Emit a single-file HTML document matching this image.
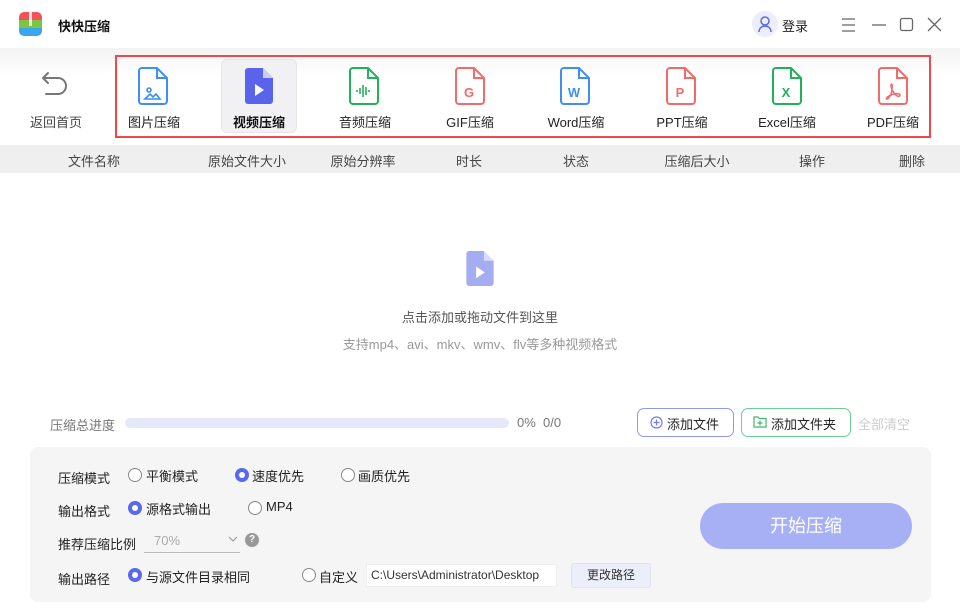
<!DOCTYPE html>
<html><head><meta charset="utf-8"><style>
*{margin:0;padding:0;box-sizing:border-box}
body{width:960px;height:614px;overflow:hidden;background:#fff;font-family:"Liberation Sans","Noto Sans CJK SC",sans-serif;color:#333;position:relative}
.a{position:absolute}
.t{font-size:13px;white-space:nowrap}
.lbl{position:absolute;top:112px;font-size:13px;color:#222;transform:translateX(-50%);white-space:nowrap}
.ic{position:absolute;top:67px;transform:translateX(-50%)}
.hd{position:absolute;top:151px;font-size:13px;color:#444;transform:translateX(-50%)}
.radio{position:absolute;width:14px;height:14px;border-radius:50%;border:1px solid #888;background:#fff}
.radio.on{border:none;background:#5a68f0}
.radio.on:after{content:"";position:absolute;left:4px;top:4px;width:6px;height:6px;border-radius:50%;background:#fff}
</style></head><body>
<!-- title bar -->
<div class="a" style="left:19px;top:12px;width:23px;height:24px;border-radius:5px;overflow:hidden">
<div style="height:8px;background:#f0545a"></div><div style="height:8px;background:#7cc444"></div><div style="height:8px;background:#3aa6f0"></div>
<div class="a" style="left:10px;top:0;width:3px;height:14px;background:#fff;opacity:.8"></div></div>
<div class="a t" style="left:58px;top:16px;font-weight:bold;color:#111">快快压缩</div>
<div class="a" style="left:752px;top:11px;width:26px;height:26px;border-radius:50%;background:#eceefc"></div>
<svg class="a" style="left:757px;top:15px" width="16" height="18" viewBox="0 0 16 18"><circle cx="8" cy="6" r="4" fill="none" stroke="#5a68f0" stroke-width="1.5"/><path d="M2 17c0-4 3-6 6-6s6 2 6 6" fill="none" stroke="#5a68f0" stroke-width="1.5"/></svg>
<div class="a t" style="left:782px;top:16px;color:#222">登录</div>
<svg class="a" style="left:841px;top:17px" width="100" height="16" viewBox="0 0 100 16"><path d="M1 2h13M1 8h13M1 14h13" stroke="#666" stroke-width="1.3"/><path d="M31 8h14" stroke="#666" stroke-width="1.3"/><rect x="59.5" y="1.5" width="12" height="12" rx="2" fill="none" stroke="#666" stroke-width="1.3"/><path d="M87 1l13 13M100 1L87 14" stroke="#666" stroke-width="1.3"/></svg>
<!-- toolbar -->
<div class="a" style="left:0;top:48px;width:960px;height:96px;background:linear-gradient(#f3f3f3,#fff 30%)"></div>
<svg class="a" style="left:40px;top:70px" width="30" height="30" viewBox="0 0 30 30"><path d="M8 3L3 8l5 5M3 8h15a8 8 0 0 1 0 16H6" fill="none" stroke="#777" stroke-width="2" stroke-linecap="round" stroke-linejoin="round"/></svg>
<div class="lbl" style="left:56px;color:#444">返回首页</div>
<div class="a" style="left:221px;top:59px;width:76px;height:74px;background:#f1f1f4;border-radius:6px;border:1px solid #e6e6ea"></div>
<div class="a" style="left:115px;top:55px;width:816px;height:83px;border:2px solid #f0474b"></div>
<svg class="ic" style="left:153px" width="30" height="38" viewBox="0 0 30 38"><path d="M4 1h15l10 10v23a3 3 0 0 1-3 3H4a3 3 0 0 1-3-3V4a3 3 0 0 1 3-3zM19 1v10h10" fill="none" stroke="#3d8ef5" stroke-width="2"/><circle cx="11" cy="23" r="2" fill="none" stroke="#3d8ef5" stroke-width="1.6"/><path d="M7 32l5-5 3 3 3-3 4 5z" fill="none" stroke="#3d8ef5" stroke-width="1.6"/></svg>
<svg class="ic" style="left:259px" width="30" height="38" viewBox="0 0 30 38"><path d="M4 1h15l10 10v23a3 3 0 0 1-3 3H4a3 3 0 0 1-3-3V4a3 3 0 0 1 3-3z" fill="#5a64ea"/><path d="M19 1v10h10z" fill="#c9cdf8"/><path d="M11 17v12l9-6z" fill="#fff"/></svg>
<svg class="ic" style="left:364px" width="30" height="38" viewBox="0 0 30 38"><path d="M4 1h15l10 10v23a3 3 0 0 1-3 3H4a3 3 0 0 1-3-3V4a3 3 0 0 1 3-3zM19 1v10h10" fill="none" stroke="#22b05a" stroke-width="2"/><path d="M8 23v2M11 21v6M14 18v12M17 20v8M20 23v2" stroke="#22b05a" stroke-width="1.6"/></svg>
<svg class="ic" style="left:470px" width="30" height="38" viewBox="0 0 30 38"><path d="M4 1h15l10 10v23a3 3 0 0 1-3 3H4a3 3 0 0 1-3-3V4a3 3 0 0 1 3-3zM19 1v10h10" fill="none" stroke="#f36a6a" stroke-width="2"/><text x="14" y="30" text-anchor="middle" font-family="Liberation Sans" font-weight="bold" font-size="13" fill="#f36a6a">G</text></svg>
<svg class="ic" style="left:575px" width="30" height="38" viewBox="0 0 30 38"><path d="M4 1h15l10 10v23a3 3 0 0 1-3 3H4a3 3 0 0 1-3-3V4a3 3 0 0 1 3-3zM19 1v10h10" fill="none" stroke="#3d8ef5" stroke-width="2"/><text x="14" y="30" text-anchor="middle" font-family="Liberation Sans" font-weight="bold" font-size="13" fill="#3d8ef5">W</text></svg>
<svg class="ic" style="left:681px" width="30" height="38" viewBox="0 0 30 38"><path d="M4 1h15l10 10v23a3 3 0 0 1-3 3H4a3 3 0 0 1-3-3V4a3 3 0 0 1 3-3zM19 1v10h10" fill="none" stroke="#f36a6a" stroke-width="2"/><text x="14" y="30" text-anchor="middle" font-family="Liberation Sans" font-weight="bold" font-size="13" fill="#f36a6a">P</text></svg>
<svg class="ic" style="left:787px" width="30" height="38" viewBox="0 0 30 38"><path d="M4 1h15l10 10v23a3 3 0 0 1-3 3H4a3 3 0 0 1-3-3V4a3 3 0 0 1 3-3zM19 1v10h10" fill="none" stroke="#22b05a" stroke-width="2"/><text x="14" y="30" text-anchor="middle" font-family="Liberation Sans" font-weight="bold" font-size="13" fill="#22b05a">X</text></svg>
<svg class="ic" style="left:893px" width="30" height="38" viewBox="0 0 30 38"><path d="M4 1h15l10 10v23a3 3 0 0 1-3 3H4a3 3 0 0 1-3-3V4a3 3 0 0 1 3-3zM19 1v10h10" fill="none" stroke="#f36a6a" stroke-width="2"/><path d="M14 17c-2 0-1 5 2 9s6 4 6 2-6-2-11 1-2 5 1 0 2-12 2-12" fill="none" stroke="#f36a6a" stroke-width="1.5"/></svg>
<div class="lbl" style="left:154px">图片压缩</div>
<div class="lbl" style="left:259px;font-weight:bold;color:#111">视频压缩</div>
<div class="lbl" style="left:365px">音频压缩</div>
<div class="lbl" style="left:470px">GIF压缩</div>
<div class="lbl" style="left:576px">Word压缩</div>
<div class="lbl" style="left:682px">PPT压缩</div>
<div class="lbl" style="left:787px">Excel压缩</div>
<div class="lbl" style="left:893px">PDF压缩</div>
<!-- header -->
<div class="a" style="left:0;top:145px;width:960px;height:28px;background:#efefef"></div>
<div class="hd" style="left:94px">文件名称</div><div class="hd" style="left:247px">原始文件大小</div><div class="hd" style="left:363px">原始分辨率</div><div class="hd" style="left:469px">时长</div><div class="hd" style="left:576px">状态</div><div class="hd" style="left:697px">压缩后大小</div><div class="hd" style="left:812px">操作</div><div class="hd" style="left:912px">删除</div>
<!-- empty -->
<svg class="a" style="left:465px;top:250px" width="30" height="37" viewBox="0 0 30 38"><path d="M4 1h15l10 10v23a3 3 0 0 1-3 3H4a3 3 0 0 1-3-3V4a3 3 0 0 1 3-3z" fill="#a4acf2"/><path d="M19 1v10h10z" fill="#d9dcfa"/><path d="M11 17v12l9-6z" fill="#fff"/></svg>
<div class="a t" style="left:0;width:960px;text-align:center;top:307px;color:#555">点击添加或拖动文件到这里</div>
<div class="a t" style="left:0;width:960px;text-align:center;top:334px;color:#999">支持mp4、avi、mkv、wmv、flv等多种视频格式</div>
<!-- progress -->
<div class="a t" style="left:50px;top:415px;color:#777">压缩总进度</div>
<div class="a" style="left:125px;top:418px;width:384px;height:10px;border-radius:5px;background:#e6e8fa"></div>
<div class="a t" style="left:517px;top:415px;color:#777">0%&nbsp; 0/0</div>
<div class="a" style="left:637px;top:408px;width:97px;height:29px;border:1.5px solid #8f98f0;border-radius:7px"></div>
<svg class="a" style="left:650px;top:416px" width="13" height="13"><circle cx="6.5" cy="6.5" r="5.5" fill="none" stroke="#6f7cf0" stroke-width="1.2"/><path d="M6.5 3.5v6M3.5 6.5h6" stroke="#6f7cf0" stroke-width="1.2"/></svg>
<div class="a t" style="left:667px;top:414px;color:#222">添加文件</div>
<div class="a" style="left:741px;top:408px;width:110px;height:29px;border:1.5px solid #6ccf93;border-radius:7px"></div>
<svg class="a" style="left:753px;top:415px" width="14" height="13"><path d="M1 2h4l1.5 1.5H13V12H1z" fill="none" stroke="#3cb86a" stroke-width="1.2"/><path d="M7 5.5v5M4.5 8h5" stroke="#3cb86a" stroke-width="1.2"/></svg>
<div class="a t" style="left:771px;top:414px;color:#222">添加文件夹</div>
<div class="a t" style="left:858px;top:414px;color:#ccc">全部清空</div>
<!-- panel -->
<div class="a" style="left:30px;top:447px;width:901px;height:155px;background:#f5f5f5;border-radius:8px"></div>
<div class="a t" style="left:58px;top:468px;color:#222">压缩模式</div>
<div class="radio" style="left:128px;top:468px"></div><div class="a t" style="left:146px;top:466px;color:#222">平衡模式</div>
<div class="radio on" style="left:235px;top:468px"></div><div class="a t" style="left:252px;top:466px;color:#222">速度优先</div>
<div class="radio" style="left:341px;top:468px"></div><div class="a t" style="left:358px;top:466px;color:#222">画质优先</div>
<div class="a t" style="left:58px;top:501px;color:#222">输出格式</div>
<div class="radio on" style="left:128px;top:501px"></div><div class="a t" style="left:146px;top:499px;color:#222">源格式输出</div>
<div class="radio" style="left:248px;top:501px"></div><div class="a t" style="left:266px;top:499px;color:#222">MP4</div>
<div class="a t" style="left:58px;top:534px;color:#222">推荐压缩比例</div>
<div class="a t" style="left:154px;top:533px;color:#aaa">70%</div>
<div class="a" style="left:144px;top:552px;width:96px;height:1px;background:#bbb"></div>
<svg class="a" style="left:228px;top:536px" width="10" height="7"><path d="M1 1l4 4 4-4" fill="none" stroke="#999" stroke-width="1.1"/></svg>
<div class="a" style="left:245px;top:533px;width:14px;height:14px;border-radius:50%;background:#999;color:#fff;font-size:10px;font-weight:bold;text-align:center;line-height:14px">?</div>
<div class="a t" style="left:58px;top:569px;color:#222">输出路径</div>
<div class="radio on" style="left:128px;top:568px"></div><div class="a t" style="left:146px;top:567px;color:#222">与源文件目录相同</div>
<div class="radio" style="left:302px;top:568px"></div><div class="a t" style="left:319px;top:567px;color:#222">自定义</div>
<div class="a" style="left:366px;top:564px;width:191px;height:23px;background:#fff;border:1px solid #eee;font-size:12px;line-height:21px;padding-left:4px;color:#333;white-space:nowrap">C:\Users\Administrator\Desktop</div>
<div class="a" style="left:571px;top:563px;width:80px;height:25px;background:#eceef9;border:1px solid #e0e2f0;border-radius:3px;font-size:12px;text-align:center;line-height:23px;color:#333">更改路径</div>
<div class="a" style="left:700px;top:503px;width:212px;height:46px;border-radius:23px;background:#a7b0f4;color:#fff;font-size:18px;text-align:center;line-height:46px">开始压缩</div>
</body></html>
